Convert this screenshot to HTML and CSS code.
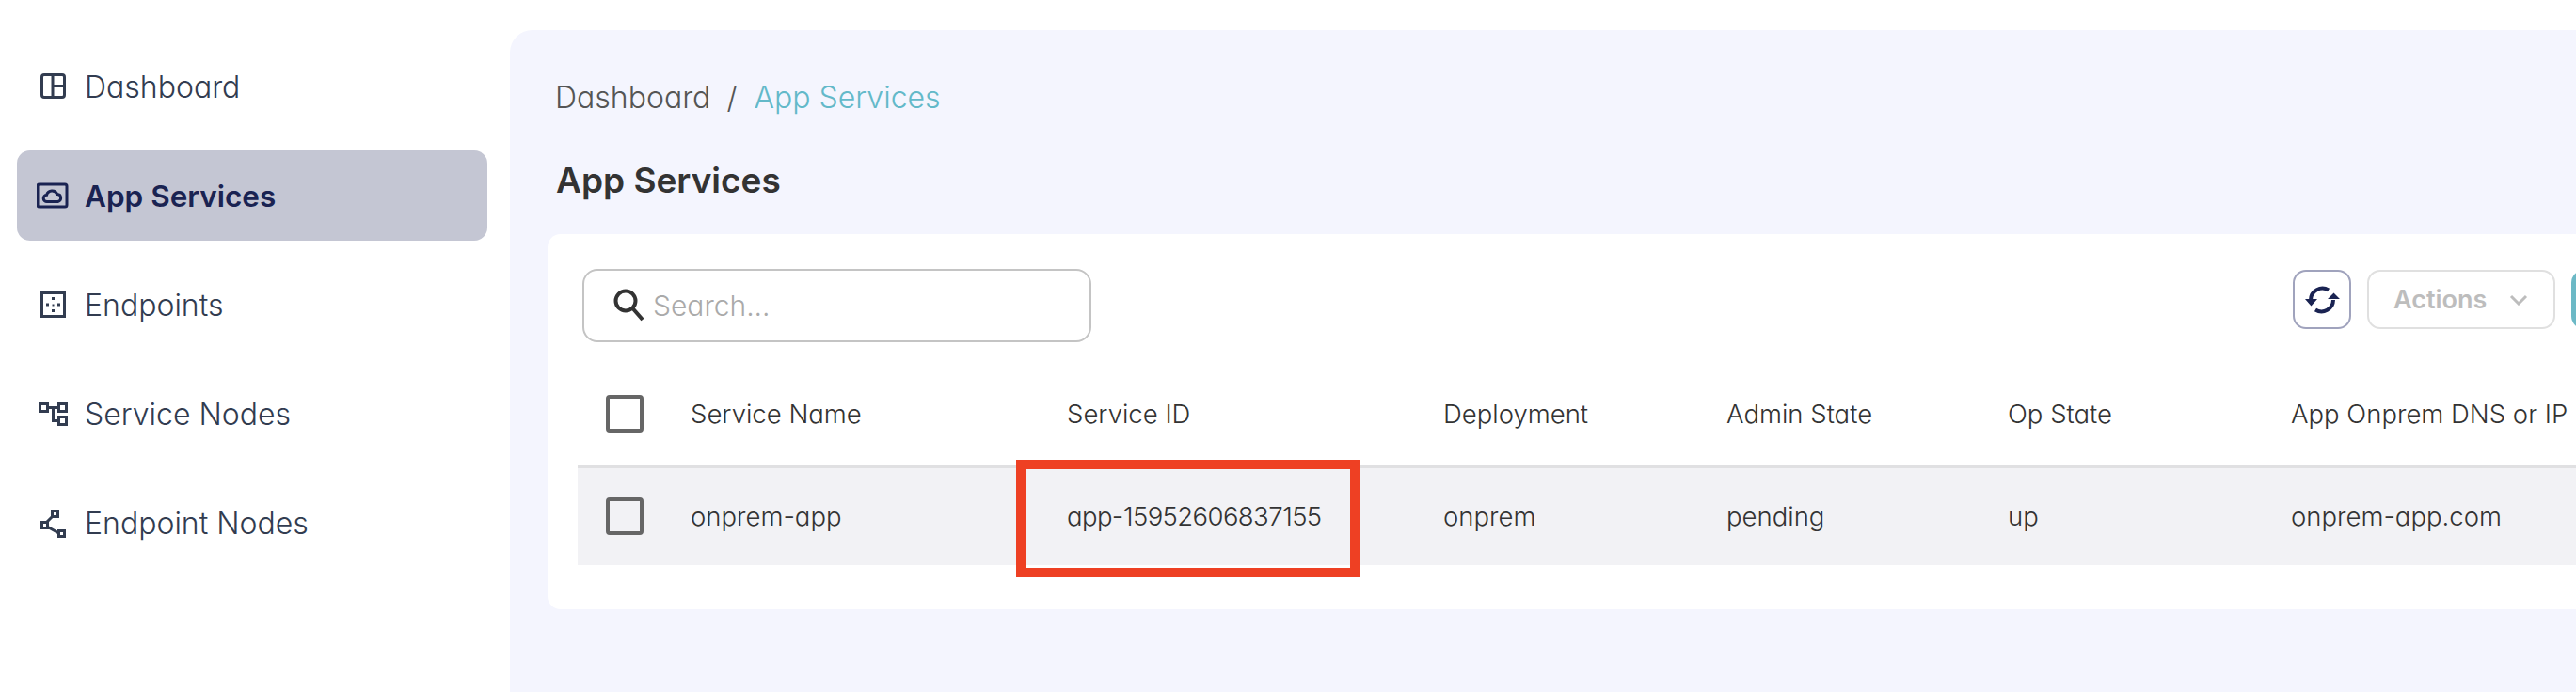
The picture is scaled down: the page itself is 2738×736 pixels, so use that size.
FILE: index.html
```html
<!DOCTYPE html>
<html lang="en">
<head>
<meta charset="utf-8">
<title>App Services</title>
<link rel="stylesheet" href="styles.css">
</head>
<body>
<div class="layout">
  <nav class="sidebar">
    <a class="nav-item">
      <svg class="nav-icon" viewBox="0 0 32 32"><rect x="4.5" y="3.500" width="24" height="24" rx="2.500"/><path d="M16 4V27M16 15.500H28"/></svg>
      <span>Dashboard</span>
    </a>
    <a class="nav-item active">
      <svg class="nav-icon" viewBox="0 0 34 32"><rect x="1" y="4" width="31" height="24" rx="2"/><path d="M11 22.500a3.600 3.600 0 0 1-.4-7.200a6 6 0 0 1 11.200-.7a4 4 0 0 1 .7 7.900Z"/></svg>
      <span>App Services</span>
    </a>
    <a class="nav-item">
      <svg class="nav-icon" viewBox="0 0 32 32"><rect x="4.5" y="3.500" width="24" height="25"/><g class="dots"><rect x="15" y="8" width="3" height="3"/><rect x="9" y="14.500" width="3" height="3"/><rect x="15.500" y="15.500" width="2" height="2"/><rect x="21" y="14.500" width="3" height="3"/><rect x="15" y="21" width="3" height="3"/></g></svg>
      <span>Endpoints</span>
    </a>
    <a class="nav-item">
      <svg class="nav-icon" viewBox="0 0 32 32"><rect x="2.5" y="5.500" width="8" height="8"/><rect x="22.500" y="5.500" width="8" height="8"/><rect x="22.500" y="19.500" width="8" height="8"/><path d="M10 9.500H22M16.500 9.500V23.500H22"/></svg>
      <span>Service Nodes</span>
    </a>
    <a class="nav-item">
      <svg class="nav-icon" viewBox="0 0 32 32"><rect x="15.500" y="3.500" width="6" height="6"/><rect x="4.500" y="15.500" width="6" height="6"/><rect x="22.500" y="24.500" width="6" height="6"/><path d="M16 9L9.500 15.500M10 20L22.500 27"/></svg>
      <span>Endpoint Nodes</span>
    </a>
  </nav>

  <main class="panel">
    <div class="breadcrumb">
      <span>Dashboard</span><span class="crumb-sep">/</span><span class="crumb-current">App Services</span>
    </div>
    <h1 class="title">App Services</h1>

    <section class="card">
      <div class="toolbar">
        <div class="search">
          <svg class="search-icon" viewBox="0 0 34 36"><circle cx="14" cy="13" r="10.500"/><path d="M21.500 21L32 33"/></svg>
          <span class="search-text">Search...</span>
        </div>
        <div class="actions">
          <button class="btn-icon">
            <svg class="refresh-icon" viewBox="0 0 40 40"><path class="arc" d="M8 20A12.500 12.500 0 0 1 27 9.500M32 20A12.500 12.500 0 0 1 13 30.500"/><path class="head" d="M2 19H15L8.500 26.500ZM26 19H39L32.500 12.500Z"/></svg>
          </button>
          <button class="btn-actions">
            <span>Actions</span>
            <svg class="chevron" viewBox="0 0 20 12"><path d="M2 2L10 10L18 2"/></svg>
          </button>
          <button class="btn-primary"></button>
        </div>
      </div>

      <div class="table">
        <div class="row head-row">
          <div class="cell-check"><span class="checkbox"></span></div>
          <div>Service Name</div>
          <div>Service ID</div>
          <div>Deployment</div>
          <div>Admin State</div>
          <div>Op State</div>
          <div>App Onprem DNS or IP</div>
        </div>
        <div class="row body-row">
          <div class="cell-check"><span class="checkbox"></span></div>
          <div>onprem-app</div>
          <div class="service-id">app-15952606837155</div>
          <div>onprem</div>
          <div>pending</div>
          <div>up</div>
          <div>onprem-app.com</div>
        </div>
        <div class="highlight"></div>
      </div>
    </section>
  </main>
</div>
</body>
</html>
```
FILE: styles.css
```css
* { box-sizing: border-box; }
html, body { margin: 0; height: 100%; overflow: hidden; background: #fff; }
body {
  font-family: Inter, "Liberation Sans", sans-serif;
  font-feature-settings: "cv11" 1;
  color: #333;
}
.layout { display: flex; height: 736px; }

.sidebar {
  flex: 0 0 542px;
  padding: 44px 24px 0 18px;
  display: flex;
  flex-direction: column;
  gap: 20px;
}
.nav-item {
  height: 96px;
  display: flex;
  align-items: center;
  gap: 18px;
  padding-left: 22px;
  font-size: 32px;
  font-weight: 300;
  color: #323c50;
  border-radius: 14px;
}
.nav-item.active { background: #c4c6d3; color: #1a2352; font-weight: 600; font-size: 31.500px; }
.nav-icon { width: 32px; height: 32px; flex: none; fill: none; stroke: currentColor; stroke-width: 3; }
.active .nav-icon { width: 34px; margin-left: -1px; margin-right: -1px; }
.dots rect { fill: currentColor; stroke: none; }

.panel {
  flex: 1;
  min-width: 0;
  margin-top: 32px;
  padding: 42px 0 0 40px;
  background: #f4f5fe;
  border-top-left-radius: 24px;
  overflow: hidden;
}
.breadcrumb { display: flex; align-items: center; height: 58px; padding-left: 8px; font-size: 32px; font-weight: 300; color: #555; }
.crumb-sep { margin: 0 18px 0 17px; }
.crumb-current { color: #63b9c9; }
.title { margin: 37px 0 0 9px; height: 46px; line-height: 46px; font-size: 37px; font-weight: 600; color: #333; }

.card {
  width: 2388px;
  margin-top: 34px;
  padding: 37px 0 47px;
  background: #fff;
  border-radius: 14px;
}
.toolbar { display: flex; align-items: flex-start; justify-content: space-between; padding: 0 37px; }
.search {
  width: 541px;
  height: 78px;
  display: flex;
  align-items: center;
  gap: 9px;
  padding-left: 30px;
  border: 2px solid #c4c4c4;
  border-radius: 16px;
}
.search-icon { width: 34px; height: 36px; fill: none; stroke: #333; stroke-width: 4; }
.search-text { font-size: 30px; font-weight: 300; color: #aaa; }
.actions { display: flex; gap: 17px; margin-top: 1px; }
button { font: inherit; background: #fff; padding: 0; }
.btn-icon {
  width: 62px; height: 63px;
  display: flex; align-items: center; justify-content: center;
  border: 2px solid #a0a3bd;
  border-radius: 14px;
}
.refresh-icon { width: 40px; height: 40px; }
.arc { fill: none; stroke: #1a2352; stroke-width: 4; }
.head { fill: #1a2352; }
.btn-actions {
  width: 200px; height: 63px;
  display: flex; align-items: center; gap: 24px;
  padding-left: 26px;
  border: 2px solid #e0e0e0;
  border-radius: 14px;
  color: #bdbdbd;
  font-size: 27px;
  font-weight: 600;
}
.chevron { width: 20px; height: 12px; fill: none; stroke: #bdbdbd; stroke-width: 3; }
.btn-primary { width: 200px; height: 63px; border: 0; border-radius: 14px; background: #6cb9c6; }

.table { position: relative; margin: 21px 0 0 32px; font-size: 27.500px; font-weight: 300; color: #333; }
.row {
  display: grid;
  grid-template-columns: 120px 400px 400px 301px 299px 301px 1fr;
  align-items: center;
}
.head-row { height: 110px; }
.body-row { height: 106px; padding-bottom: 2px; border-top: 3px solid #e0e0e2; background: #f2f2f5; }
.service-id { letter-spacing: -0.6px; }
.cell-check { padding-left: 30px; display: flex; }
.checkbox { width: 40px; height: 40px; border: 4.500px solid #666; border-radius: 4px; }
.highlight {
  position: absolute;
  left: 466px;
  top: 104px;
  width: 365px;
  height: 125px;
  border: 10px solid #ee4023;
}
```
